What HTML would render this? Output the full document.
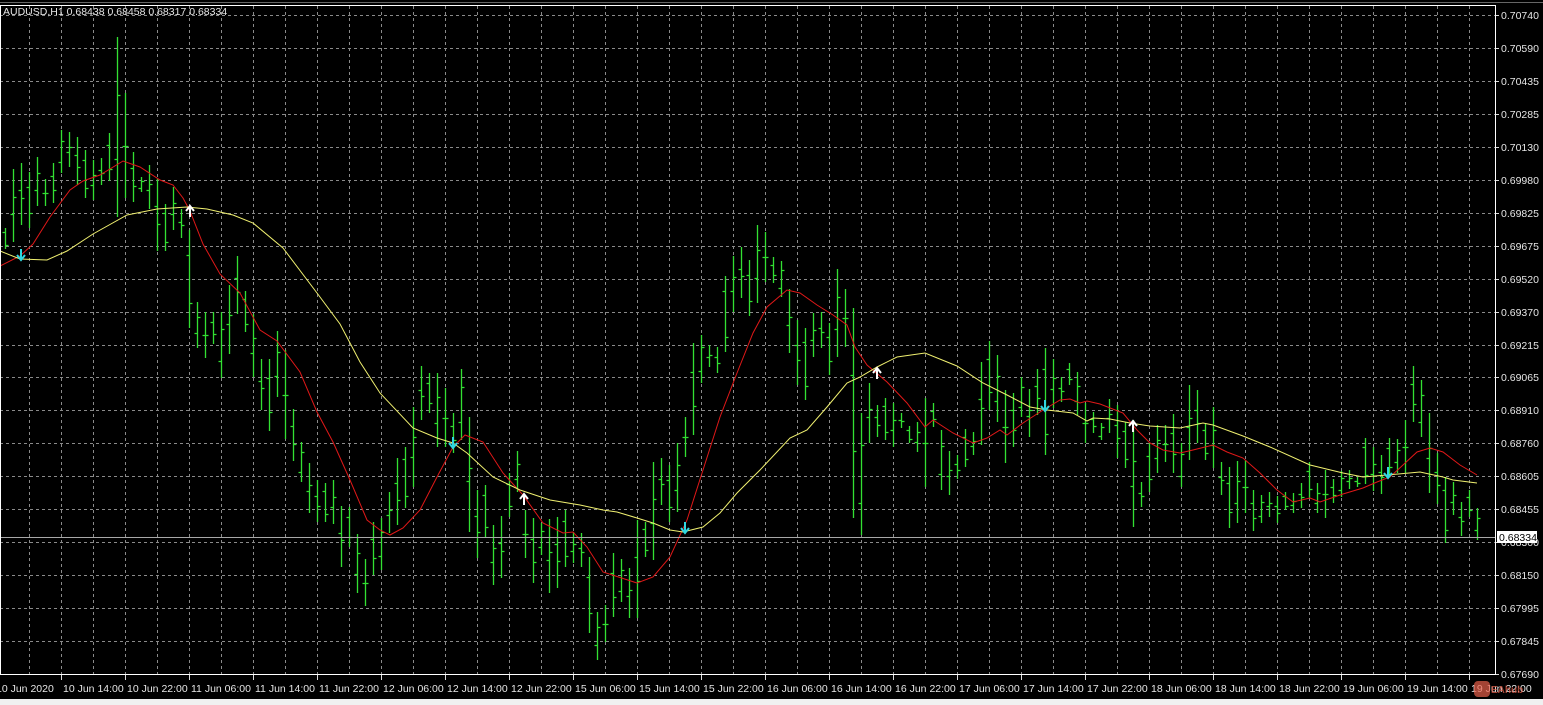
<!DOCTYPE html>
<html><head><meta charset="utf-8">
<style>
html,body{margin:0;padding:0;background:#000;width:1543px;height:705px;overflow:hidden}
svg{display:block}
text{font-family:"Liberation Sans","DejaVu Sans",sans-serif;font-size:10.5px;fill:#e6e6e6}
</style></head><body>
<svg id="s" width="1543" height="705" xmlns="http://www.w3.org/2000/svg">
<rect x="0" y="0" width="1543" height="705" fill="#000"/>
<g id="grid"></g>
<g id="bars" stroke="#32e032" stroke-width="1.3" fill="none"></g>
<polyline id="red" fill="none" stroke="#e01818" stroke-width="1"/>
<polyline id="yel" fill="none" stroke="#f0f070" stroke-width="1"/>
<g id="arrows"></g>
<line x1="0" y1="537.5" x2="1495" y2="537.5" stroke="#a8a8a8" stroke-width="1"/>
<rect x="0.5" y="5.5" width="1495" height="669" fill="none" stroke="#fff" stroke-width="1"/>
<line x1="0" y1="2.5" x2="1543" y2="2.5" stroke="#666"/>
<g id="labels"></g>
<text x="3" y="15">AUDUSD,H1  0.68438 0.68458 0.68317 0.68334</text>
<rect x="1497" y="531" width="40" height="12" fill="#fff"/>
<text x="1499" y="541" style="fill:#000">0.68334</text>
<rect x="1474" y="681" width="16" height="16" rx="4" fill="#e8604a" opacity="0.7"/>
<text x="1491" y="693" style="fill:#e8604a;font-weight:bold;font-size:10px;opacity:0.7">EAhub</text>
<rect x="0" y="699" width="1543" height="6" fill="#f0f0f0"/>
</svg>
<script>
var NS="http://www.w3.org/2000/svg";
function el(t,a,p){var e=document.createElementNS(NS,t);for(var k in a)e.setAttribute(k,a[k]);document.getElementById(p).appendChild(e);return e;}
for(var i=0;i<21;i++){var y=15+i*32.95;y=Math.round(y)+0.5;
 el("line",{x1:0,y1:y,x2:1495,y2:y,stroke:"#8a8a8a","stroke-dasharray":"3,3"},"grid");
 el("line",{x1:1495,y1:y,x2:1499,y2:y,stroke:"#ddd"},"grid");}
for(var x=29;x<1495;x+=32){el("line",{x1:x+0.5,y1:6,x2:x+0.5,y2:675,stroke:"#8a8a8a","stroke-dasharray":"3,3"},"grid");}
var prices=["0.70740","0.70590","0.70435","0.70285","0.70130","0.69980","0.69825","0.69675","0.69520","0.69370","0.69215","0.69065","0.68910","0.68760","0.68605","0.68455","0.68300","0.68150","0.67995","0.67845","0.67690"];
prices.forEach(function(p,i){var t=el("text",{x:1501,y:Math.round(15+i*32.95)+4},"labels");t.textContent=p;});
var dl=["10 Jun 14:00","10 Jun 22:00","11 Jun 06:00","11 Jun 14:00","11 Jun 22:00","12 Jun 06:00","12 Jun 14:00","12 Jun 22:00","15 Jun 06:00","15 Jun 14:00","15 Jun 22:00","16 Jun 06:00","16 Jun 14:00","16 Jun 22:00","17 Jun 06:00","17 Jun 14:00","17 Jun 22:00","18 Jun 06:00","18 Jun 14:00","18 Jun 22:00","19 Jun 06:00","19 Jun 14:00","19 Jun 22:00"];
var t0=el("text",{x:-4,y:692},"labels");t0.textContent="10 Jun 2020";
dl.forEach(function(d,i){var x=61+64*i;el("line",{x1:x+0.5,y1:675,x2:x+0.5,y2:680,stroke:"#ddd"},"labels");var t=el("text",{x:x+2,y:692},"labels");t.textContent=d;});
var z5=[[520,575],[365,555],[348,510],[372,518],[332,460],[390,460],[348,452],[262,375],[268,360],[280,405],[315,440],[340,445],[335,405],[270,395],[18,490],[165,440],[320,450],[385,425],[355,470],[390,580],[455,580],[412,525],[470,545],[525,780],[712,832],[738,860],[738,822],[738,912],[668,848],[592,745],[685,790],[745,908],[862,995],[862,1050],[788,962],[838,1072],[992,1130],[1080,1185],[1135,1265],[1180,1290],[1188,1290],[1180,1295],[1248,1408],[1250,1355],[1320,1475],[1385,1510]];
var B=[];z5.forEach(function(b){B.push([30+b[0]/2.62,30+b[1]/2.62]);});
var z6=[[965,1125],[955,1110],[875,1000],[775,975],[742,925],[620,862],[498,660],[520,640],[520,740],[565,740],[640,760],[508,720],[650,995],[870,1075],[855,1010],[975,1155],[948,1135],[820,950],[752,875],[930,1075],[955,1150],[970,1065],[958,1180],[950,1165],[930,1100],[995,1090],[1000,1100],[1070,1300],[1235,1380],[1215,1325],[1060,1250],[1078,1205],[1105,1255],[960,1255],[965,1070],[785,1080],[775,915],[795,965],[730,935],[650,770],[430,705],[405,550],[435,500],[440,520],[228,455],[168,335],[140,295],[180,348]];
z6.forEach(function(b){B.push([200+b[0]/3,200+b[1]/3]);});
var z7=[[75,310],[95,245],[172,250],[182,290],[268,458],[360,555],[385,600],[340,470],[335,445],[368,525],[208,470],[268,440],[325,955],[640,1005],[548,730],[615,710],[595,720],[610,740],[640,685],[678,730],[665,755],[595,860],[610,680],[690,870],[752,885],[765,838],[688,800],[695,765],[485,735],[422,630],[465,665],[570,790],[580,740],[532,650],[568,710],[508,645],[445,765],[478,625],[532,605],[488,555],[515,645],[610,730],[635,700],[670,720],[598,700],[615,775]];
z7.forEach(function(b){B.push([200+b[0]/3,200+b[1]/3]);});
var z8=[[245,385],[240,562],[425,500],[310,455],[255,400],[255,365],[222,400],[310,440],[135,360],[150,308],[250,360],[200,385],[365,465],[380,565],[362,550],[360,520],[450,572],[465,550],[455,530],[468,548],[455,510],[460,518],[430,505],[365,475],[428,520],[390,535],[418,490],[392,470],[390,448],[410,440],[295,432],[320,452],[345,462],[295,412],[298,400],[240,400],[78,245],[120,290],[220,460],[340,492],[410,610],[425,525],[485,588],[450,530],[505,600]];
z8.forEach(function(b){B.push([340+b[0]/3,340+b[1]/3]);});
B.forEach(function(b,i){var x=5+8*i+0.5;var h=Math.round(b[0]),l=Math.round(b[1]);
 var r=((i*37)%10)/10;var o=Math.round(h+(l-h)*(0.2+0.6*r))+0.5;var c=Math.round(h+(l-h)*(0.8-0.6*r))+0.5;
 el("path",{d:"M"+x+","+h+"V"+l+"M"+(x-3)+","+o+"H"+x+"M"+x+","+c+"H"+(x+3)},"bars");});
var red=[[0,266],[20,256],[33,244],[50,217],[70,190],[83,181],[100,175],[123,161],[140,167],[160,180],[173,185],[183,198],[190,211],[203,244],[220,274],[240,293],[260,330],[277,341],[300,372],[317,412],[333,442],[350,480],[367,520],[380,530],[390,535],[403,528],[420,510],[437,477],[453,447],[465,435],[483,442],[503,473],[523,495],[543,523],[563,533],[573,532],[587,547],[603,572],[637,583],[653,577],[670,557],[687,520],[703,470],[720,417],[737,373],[753,333],[767,307],[787,290],[800,293],[817,305],[833,315],[847,325],[855,347],[867,365],[887,382],[907,403],[925,427],[933,420],[953,433],[973,443],[987,438],[1000,430],[1007,435],[1023,423],[1040,412],[1060,400],[1070,399],[1080,403],[1087,401],[1100,404],[1123,413],[1137,430],[1150,443],[1163,450],[1180,453],[1193,450],[1213,445],[1227,452],[1243,458],[1260,473],[1277,490],[1293,502],[1310,498],[1320,502],[1343,494],[1363,488],[1377,482],[1390,477],[1403,465],[1417,452],[1430,448],[1443,452],[1460,465],[1477,475]];
var yel=[[0,251],[20,259],[47,260],[67,251],[93,234],[127,215],[157,209],[187,207],[207,209],[233,215],[253,223],[283,248],[317,293],[340,324],[360,362],[380,393],[413,428],[437,438],[453,443],[467,453],[493,477],[520,490],[550,500],[580,505],[603,510],[617,512],[637,518],[653,523],[670,530],[683,532],[703,527],[720,513],[737,493],[760,470],[790,438],[807,430],[827,407],[847,383],[860,377],[877,367],[897,357],[925,353],[957,366],[983,383],[1007,395],[1030,407],[1047,410],[1073,413],[1087,421],[1093,418],[1110,419],[1130,423],[1150,426],[1180,428],[1203,423],[1213,425],[1243,436],[1270,447],[1310,465],[1343,473],[1363,477],[1387,475],[1420,472],[1443,477],[1453,480],[1477,483]];
document.getElementById("red").setAttribute("points",red.map(function(p){return p.join(",")}).join(" "));
document.getElementById("yel").setAttribute("points",yel.map(function(p){return p.join(",")}).join(" "));
function arrow(x,y,down,col){var d=down?"M"+x+","+(y-9)+" L"+x+","+(y+2)+" M"+(x-4)+","+(y-3)+" L"+x+","+(y+2)+" L"+(x+4)+","+(y-3):"M"+x+","+(y+9)+" L"+x+","+(y-2)+" M"+(x-4)+","+(y+3)+" L"+x+","+(y-2)+" L"+(x+4)+","+(y+3);
 el("path",{d:d,stroke:col,"stroke-width":2,fill:"none"},"arrows");}
[[21,258],[453,446],[685,531],[1045,409],[1388,476]].forEach(function(a){arrow(a[0],a[1],true,"#30d8e0");});
[[190,208],[524,496],[877,370],[1133,423]].forEach(function(a){arrow(a[0],a[1],false,"#ffffff");});
</script>
</body></html>
